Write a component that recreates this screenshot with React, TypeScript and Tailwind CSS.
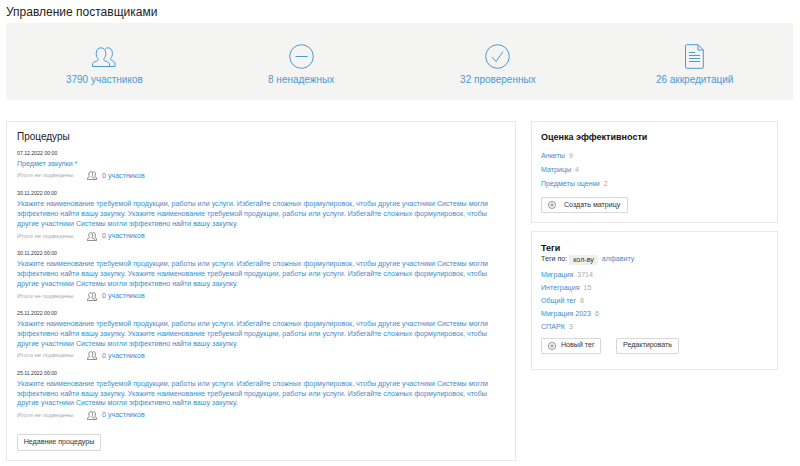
const longText =
  "Укажите наименование требуемой продукции, работы или услуги. Избегайте сложных формулировок, чтобы другие участники Системы могли эффективно найти вашу закупку. Укажите наименование требуемой продукции, работы или услуги. Избегайте сложных формулировок, чтобы другие участники Системы могли эффективно найти вашу закупку.";

const procedures = [
  { date: "07.12.2022 00:00", title: "Предмет закупки *" },
  { date: "30.11.2022 00:00", title: longText },
  { date: "30.11.2022 00:00", title: longText },
  { date: "25.11.2022 00:00", title: longText },
  { date: "25.11.2022 00:00", title: longText },
];

function UsersIcon({ className, strokeWidth = 1 }: { className?: string; strokeWidth?: number }) {
  return (
    <svg viewBox="0 0 24 20" fill="none" stroke="currentColor" strokeWidth={strokeWidth} className={className}>
      <path d="M.5 19.500v-2.500c0-1 .8-1.600 2-2.100l3-1.200c.8-.4 1-1.200.6-1.900C4.800 10.400 4.200 8.600 4.200 6.500 4.200 3 6.200.8 9 .8s4.800 2.200 4.800 5.700c0 2.100-.6 3.900-1.900 5.300-.4.7-.2 1.500.6 1.900l3 1.200c1.200.5 2 1.100 2 2.100v2.500z" />
      <path d="M13.200 2c.9-.8 1.800-1.200 2.800-1.200 2.600 0 4.400 2.200 4.400 5.500 0 2.100-.6 3.800-1.700 5.100-.4.7-.2 1.400.5 1.800l1.600.7c1.200.5 2.200 1.100 2.200 2.100v3.500h-5.800" />
    </svg>
  );
}

function PlusCircle() {
  return (
    <svg viewBox="0 0 10 10" fill="none" stroke="#555" strokeWidth="0.8" className="h-[8px] w-[8px] shrink-0">
      <circle cx="5" cy="5" r="4.400" />
      <path d="M5 2.800v4.400M2.800 5h4.400" />
    </svg>
  );
}

function Stat({ icon, label }: { icon: React.ReactNode; label: string }) {
  return (
    <div className="flex flex-col items-center">
      <div className="flex h-[25px] items-center justify-center">{icon}</div>
      <span className="mt-[4px] text-[10px] leading-[14px]">{label}</span>
    </div>
  );
}

function Counter({ name, count }: { name: string; count: string }) {
  return (
    <div className="text-[7.100px] leading-[inherit]">
      <span className="text-[#3b8ed0]">{name}</span>
      <span className="ml-[4px] text-[#aaa]">{count}</span>
    </div>
  );
}

function Button({ children, className }: { children: React.ReactNode; className?: string }) {
  return (
    <button
      className={`flex h-[16px] items-center whitespace-nowrap rounded-[1px] border border-[#d8d8d8] bg-white text-[7.100px] text-[#333] ${className ?? ""}`}
    >
      {children}
    </button>
  );
}

export default function App() {
  return (
    <div className="h-[466px] w-[800px] overflow-hidden bg-white pl-[6px] font-['Liberation_Sans',Arial,sans-serif]">
      <h1 className="pt-[3px] text-[12px] leading-[19px] text-[#222]">Управление поставщиками</h1>

      {/* stats */}
      <div className="mt-[1px] grid h-[77px] w-[787px] grid-cols-4 items-center rounded-[1px] bg-[#f4f4f3] pt-[8px] text-[#4b9ad4]">
        <Stat icon={<UsersIcon className="h-[20px] w-[24px]" />} label="3790 участников" />
        <Stat
          icon={
            <svg viewBox="0 0 25 25" fill="none" stroke="currentColor" strokeWidth="1" className="h-[25px] w-[25px]">
              <circle cx="12.500" cy="12.500" r="11.800" />
              <path d="M6.500 12.500h12" />
            </svg>
          }
          label="8 ненадежных"
        />
        <Stat
          icon={
            <svg viewBox="0 0 25 25" fill="none" stroke="currentColor" strokeWidth="1" className="h-[25px] w-[25px]">
              <circle cx="12.500" cy="12.500" r="11.800" />
              <path d="M7 13l4 4.500 7-10" />
            </svg>
          }
          label="32 проверенных"
        />
        <Stat
          icon={
            <svg viewBox="0 0 19 25" fill="none" stroke="currentColor" strokeWidth="1" className="h-[25px] w-[19px]">
              <path d="M1.500.700h11.500l5.300 5.300v17c0 .8-.5 1.300-1.300 1.300H1.800c-.8 0-1.300-.5-1.300-1.300V1.700c0-.6.4-1 1-1z" />
              <path d="M13 .700v5.300h5.300" />
              <path d="M4 8.500h6M4 11.500h11M4 14.500h11M4 17.500h11" />
            </svg>
          }
          label="26 аккредитаций"
        />
      </div>

      <div className="mt-[21px] flex items-start gap-[15px]">
        {/* procedures */}
        <section className="h-[340px] w-[510px] border border-[#e8e8e8] px-[10px] pt-[8px]">
          <h2 className="text-[10px] leading-[14px] text-[#222]">Процедуры</h2>
          <div className="mt-[4.500px] flex flex-col gap-[7px]">
            {procedures.map((p, i) => (
              <div key={i} className="first:mb-[0.500px]">
                <div className="text-[5.200px] leading-[9px] text-[#333]">{p.date}</div>
                <div className="mt-[2px] pr-[12px] text-[7.100px] leading-[9.750px] text-[#3b8ed0]">{p.title}</div>
                <div className="mt-[0.600px] flex h-[12px] items-center">
                  <span className="w-[70px] text-[6px] text-[#aaa]">Итоги не подведены</span>
                  <UsersIcon className="h-[9px] w-[10px] text-[#555]" strokeWidth={1.6} />
                  <span className="ml-[5px] text-[7.100px] text-[#3b8ed0]">0 участников</span>
                </div>
              </div>
            ))}
          </div>
          <Button className="mt-[12px] h-[17px] w-[84px] justify-center">Недавние процедуры</Button>
        </section>

        {/* right column */}
        <div className="flex w-[247px] flex-col gap-[8px]">
          <section className="h-[102px] border border-[#e8e8e8] px-[9px] pt-[8.500px]">
            <h2 className="text-[9px] font-bold leading-[13px] text-[#111]">Оценка эффективности</h2>
            <div className="mt-[5.500px] leading-[14px]">
              <Counter name="Анкеты" count="9" />
              <Counter name="Матрицы" count="4" />
              <Counter name="Предметы оценки" count="2" />
            </div>
            <Button className="mt-[6px] w-[87px] gap-[8px] pl-[6px]">
              <PlusCircle />
              Создать матрицу
            </Button>
          </section>

          <section className="h-[139px] border border-[#e8e8e8] px-[9px] pt-[9.700px]">
            <h2 className="text-[9px] font-bold leading-[12px] text-[#111]">Теги</h2>
            <div className="mt-[1px] flex h-[10px] items-center text-[7.100px] text-[#333]">
              <span>Теги по:</span>
              <span className="ml-[2px] rounded-[1px] bg-[#f0efec] px-[4px] leading-[10px]">кол-ву</span>
              <span className="ml-[4px] text-[#3b8ed0]">алфавиту</span>
            </div>
            <div className="mt-[4px] leading-[13px]">
              <Counter name="Миграция" count="3714" />
              <Counter name="Интеграция" count="15" />
              <Counter name="Общий тег" count="8" />
              <Counter name="Миграция 2023" count="6" />
              <Counter name="СПАРК" count="3" />
            </div>
            <div className="mt-[4px] flex gap-[15px]">
              <Button className="w-[60px] gap-[5px] pl-[6px]">
                <PlusCircle />
                Новый тег
              </Button>
              <Button className="w-[63px] justify-center">Редактировать</Button>
            </div>
          </section>
        </div>
      </div>
    </div>
  );
}
